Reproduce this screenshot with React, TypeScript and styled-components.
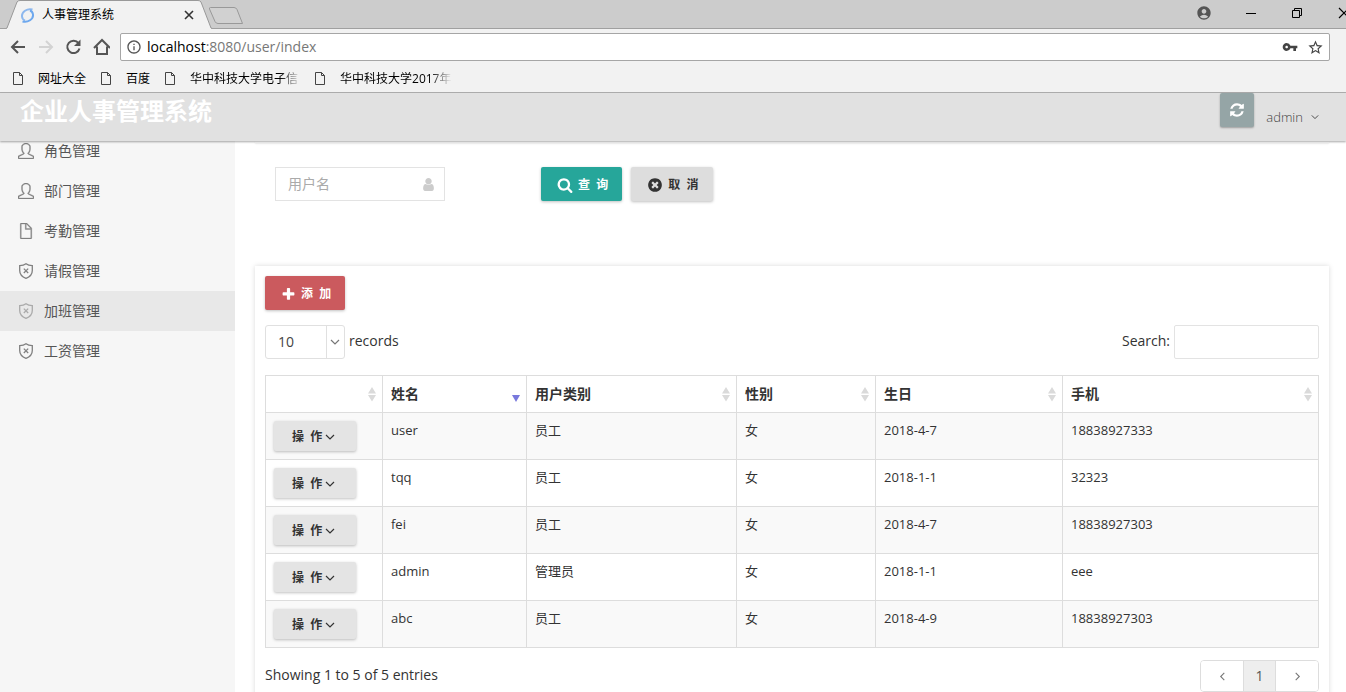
import React from "react";
import styled, { createGlobalStyle, css } from "styled-components";
import { MdAccountCircle, MdInfoOutline, MdStarBorder, MdVpnKey } from "react-icons/md";
import { SlDoc, SlUser } from "react-icons/sl";

const GlobalStyle = createGlobalStyle`
  * { box-sizing: border-box; }
  body {
    margin: 0;
    background: #fff;
    color: #333;
    font: 14px/20px "Open Sans", "Noto Sans CJK SC", sans-serif;
  }
  button, input, select { font: inherit; color: inherit; }
  button { cursor: pointer; }
  svg { display: block; flex: none; }
`;

const Shell = styled.div`
  display: flex;
  flex-direction: column;
  height: 100vh;
  overflow: hidden;
`;

/* ---------- browser window ---------- */

const TabStrip = styled.div`
  display: flex;
  flex: none;
  height: 29px;
  padding-left: 6px;
  background: #ccc;
  box-shadow: inset 0 -1px #a0a0a0;
`;

const Tab = styled.div`
  position: relative;
  display: flex;
  align-items: center;
  width: 206px;
  padding: 1px 18px 0 14px;
  color: #000;
  font-size: 12px;
`;

const TabShape = styled.svg`
  position: absolute;
  inset: 0;
`;

const TabTitle = styled.span`
  position: relative;
  flex: 1;
  margin-left: 7px;
`;

const TabIcon = styled.svg`
  position: relative;
`;

const PlainButton = styled.button`
  display: flex;
  position: relative;
  padding: 0;
  border: 0;
  background: none;
`;

const NewTab = styled(PlainButton)`
  align-self: flex-start;
  margin: 6px 0 0 -4px;
`;

const WindowControls = styled.div`
  display: flex;
  align-items: center;
  gap: 34px;
  margin-left: auto;
  height: 26px;
  color: #000;
`;

const Toolbar = styled.div`
  display: flex;
  flex: none;
  align-items: center;
  gap: 10px;
  height: 36px;
  padding: 0 16px 0 8px;
  background: #f2f2f2;
  color: #555;
`;

const NavButton = styled(PlainButton)<{ $dim?: boolean }>`
  color: ${(p) => (p.$dim ? "#d3d3d3" : "#555")};
`;

const AddressBar = styled.div`
  display: flex;
  flex: 1;
  align-items: center;
  height: 28px;
  padding: 0 5px;
  border: 1px solid #a6a6a6;
  border-radius: 2px;
  background: #fff;
`;

const Url = styled.div`
  flex: 1;
  margin-left: 5px;
  color: #777;
  font-size: 14px;
  b { color: #000; font-weight: 400; }
`;

const AddressIcons = styled.div`
  display: flex;
  align-items: center;
  gap: 9px;
  color: #444;
`;

const Bookmarks = styled.nav`
  display: flex;
  flex: none;
  gap: 15px;
  height: 28px;
  padding: 0 13px;
  border-bottom: 1px solid #b0b0b0;
  background: #f2f2f2;
`;

const Bookmark = styled.a`
  display: flex;
  align-items: center;
  gap: 14px;
  color: #000;
  font-size: 12px;
  text-decoration: none;
  svg { color: #444; }
`;

const BookmarkText = styled.span<{ $faded: boolean }>`
  white-space: nowrap;
  ${(p) =>
    p.$faded &&
    css`
      min-width: 110px;
      mask-image: linear-gradient(to right, #000 90px, transparent 112px);
    `}
`;

/* ---------- application ---------- */

const Header = styled.header`
  position: relative;
  z-index: 1;
  display: flex;
  flex: none;
  justify-content: space-between;
  align-items: flex-start;
  height: 48px;
  padding: 0 27px 0 20px;
  background: #e1e1e1;
  box-shadow: 0 1px 2px rgba(0, 0, 0, 0.35);
`;

const Brand = styled.h1`
  margin: 0;
  color: #fff;
  font-size: 24px;
  font-weight: 700;
  line-height: 36px;
`;

const HeaderTools = styled.div`
  display: flex;
  gap: 12px;
`;

const RefreshButton = styled.button`
  display: grid;
  place-items: center;
  width: 34px;
  height: 34px;
  padding: 0;
  border: 0;
  border-radius: 2px;
  background: #95a5a6;
  color: #fff;
  box-shadow: 0 1px 2px rgba(0, 0, 0, 0.3);
`;

const UserMenu = styled.button`
  display: flex;
  align-items: center;
  gap: 8px;
  height: 48px;
  padding: 0;
  border: 0;
  background: none;
  color: #444;
  font-size: 13px;
  font-weight: 300;
`;

const Body = styled.div`
  display: flex;
  flex: 1;
  min-height: 0;
`;

const Sidebar = styled.nav`
  flex: none;
  width: 235px;
  background: #f6f6f6;
`;

const Menu = styled.ul`
  margin: -10px 0 0;
  padding: 0;
  list-style: none;
`;

const MenuLink = styled.a<{ $active: boolean }>`
  display: flex;
  align-items: center;
  gap: 10px;
  height: 40px;
  padding: 0 18px;
  background: ${(p) => (p.$active ? "#e8e8e8" : "none")};
  color: #555;
  text-decoration: none;
  svg { color: ${(p) => (p.$active ? "#aaa" : "#808080")}; }
`;

const Main = styled.main`
  flex: 1;
  min-width: 0;
  padding: 0 17px 0 20px;
`;

const UpperPanelEdge = styled.div`
  height: 2px;
  background: #fff;
  box-shadow: 0 1px 2px rgba(0, 0, 0, 0.08);
`;

const Filters = styled.form`
  display: grid;
  grid-template-columns: 266px auto;
  padding: 24px 20px 65px;
`;

const NameField = styled.label`
  display: flex;
  align-items: center;
  width: 170px;
  height: 34px;
  padding: 0 8px 0 12px;
  border: 1px solid #e3e3e3;
  color: #ccc;
  input {
    flex: 1;
    min-width: 0;
    padding: 0;
    border: 0;
    outline: 0;
    color: #333;
  }
  input::placeholder { color: #aaa; opacity: 1; }
`;

const ButtonGroup = styled.div`
  display: flex;
  gap: 9px;
`;

const tones = {
  teal: "background: #26a69a; color: #fff;",
  grey: "background: #ddd; color: #333;",
  red: "background: #cb5a5e; color: #fff;",
  light: "background: #e4e4e4; color: #333;",
};

const Button = styled.button<{ $tone: keyof typeof tones; $small?: boolean }>`
  display: flex;
  align-items: center;
  justify-content: center;
  gap: ${(p) => (p.$small ? 3 : 5)}px;
  height: ${(p) => (p.$small ? 30 : 34)}px;
  padding: ${(p) => (p.$small ? "2px 21px 0 18px" : "2px 14px 0 16px")};
  border: 0;
  border-radius: 2px;
  font-size: 12px;
  font-weight: 700;
  white-space: nowrap;
  box-shadow: 0 1px 3px rgba(0, 0, 0, 0.25);
  ${(p) => tones[p.$tone]}
`;

const Panel = styled.section`
  padding: 10px 10px 20px;
  background: #fff;
  box-shadow: 0 0 5px rgba(0, 0, 0, 0.15);
`;

const Bar = styled.div<{ $top: number }>`
  display: flex;
  align-items: center;
  justify-content: space-between;
  margin-top: ${(p) => p.$top}px;
`;

const Caption = styled.span`
  padding-bottom: 2px;
`;

const Length = styled.label`
  display: flex;
  align-items: center;
  gap: 4px;
`;

const SelectBox = styled.span`
  display: flex;
  align-items: center;
  position: relative;
  width: 80px;
  height: 34px;
  border: 1px solid #e0e0e0;
  border-radius: 3px;
  color: #777;
  select {
    width: 100%;
    height: 32px;
    padding: 0 0 0 12px;
    border: 0;
    outline: 0;
    background: linear-gradient(#e0e0e0, #e0e0e0) 60px 0 / 1px 100% no-repeat;
    color: #444;
    appearance: none;
  }
  svg {
    position: absolute;
    right: 4px;
    pointer-events: none;
  }
`;

const Search = styled.label`
  display: flex;
  align-items: center;
  gap: 4px;
  input {
    width: 145px;
    height: 34px;
    padding: 6px 12px;
    border: 1px solid #e3e3e3;
    border-radius: 2px;
  }
`;

const Table = styled.table`
  width: 100%;
  margin-top: 16px;
  border-collapse: collapse;
  table-layout: fixed;
  font-size: 13px;
  line-height: 18px;
`;

const HeadCell = styled.th`
  padding: 8px;
  border: 1px solid #ddd;
  text-align: left;
  font-size: 14px;
  font-weight: 700;
  > div {
    display: flex;
    align-items: center;
    justify-content: space-between;
    height: 20px;
    margin-right: -2px;
  }
`;

const Row = styled.tr`
  &:nth-child(odd) { background: #f9f9f9; }
`;

const Cell = styled.td`
  padding: 8px;
  border: 1px solid #ddd;
  vertical-align: top;
`;

const Pager = styled.div`
  display: flex;
  height: 32px;
  border: 1px solid #ddd;
  border-radius: 4px;
  overflow: hidden;
`;

const PageButton = styled.button<{ $current?: boolean }>`
  display: grid;
  place-items: center;
  width: ${(p) => (p.$current ? 33 : 42)}px;
  padding: 0;
  border: solid #ddd;
  border-width: ${(p) => (p.$current ? "0 1px" : "0")};
  background: ${(p) => (p.$current ? "#eee" : "#fff")};
  color: ${(p) => (p.$current ? "#555" : "#777")};
`;

/* ---------- icons ---------- */

const chevrons = {
  down: "M1 3 L5 7 L9 3",
  left: "M7 1 L3 5 L7 9",
  right: "M3 1 L7 5 L3 9",
};

function Chevron({ to = "down", size = 10 }: { to?: keyof typeof chevrons; size?: number }) {
  return (
    <svg width={size} height={size} viewBox="0 0 10 10" fill="none" stroke="currentColor" strokeWidth="1.2">
      <path d={chevrons[to]} />
    </svg>
  );
}

const glyphs = {
  search:
    "M1216 832q0-185-131.500-316.500t-316.500-131.500-316.500 131.500-131.500 316.500 131.500 316.500 316.500 131.500 316.500-131.500 131.500-316.500zm512 832q0 52-38 90t-90 38q-54 0-90-38l-343-342q-179 124-399 124-143 0-273.500-55.500t-225-150-150-225-55.500-273.500 55.500-273.500 150-225 225-150 273.500-55.500 273.500 55.500 225 150 150 225 55.500 273.500q0 220-124 399l343 343q37 37 37 90z",
  cancel:
    "M1277 1122q0-26-19-45l-181-181 181-181q19-19 19-45 0-27-19-46l-90-90q-19-19-46-19-26 0-45 19l-181 181-181-181q-19-19-45-19-27 0-46 19l-90 90q-19 19-19 46 0 26 19 45l181 181-181 181q-19 19-19 45 0 27 19 46l90 90q19 19 46 19 26 0 45-19l181-181 181 181q19 19 45 19 27 0 46-19l90-90q19-19 19-46zm387-226q0 209-103 385.500t-279.500 279.500-385.500 103-385.500-103-279.500-279.500-103-385.500 103-385.500 279.500-279.500 385.500-103 385.500 103 279.500 279.500 103 385.500z",
  plus:
    "M1600 736v192q0 40-28 68t-68 28h-416v416q0 40-28 68t-68 28h-192q-40 0-68-28t-28-68v-416h-416q-40 0-68-28t-28-68v-192q0-40 28-68t68-28h416v-416q0-40 28-68t68-28h192q40 0 68 28t28 68v416h416q40 0 68 28t28 68z",
  refresh:
    "M1639 1056q0 5-1 7-64 268-268 434.500t-478 166.500q-146 0-282.500-55t-243.500-157l-129 129q-19 19-45 19t-45-19-19-45v-448q0-26 19-45t45-19h448q26 0 45 19t19 45-19 45l-137 137q71 66 161 102t187 36q134 0 250-65t186-179q11-17 53-117 8-23 30-23h192q13 0 22.500 9.500t9.500 22.500zm25-800v448q0 26-19 45t-45 19h-448q-26 0-45-19t-19-45 19-45l138-138q-148-137-349-137-134 0-250 65t-186 179q-11 17-53 117-8 23-30 23h-199q-13 0-22.500-9.500t-9.500-22.500v-7q65-268 270-434.500t480-166.500q146 0 284 55.500t245 156.500l130-129q19-19 45-19t45 19 19 45z",
  user:
    "M1536 1399q0 109-62.500 187t-150.500 78h-854q-88 0-150.500-78t-62.500-187q0-85 8.500-160.500t31.500-152 58.500-131 94-89 134.500-34.500q131 128 313 128t313-128q76 0 134.500 34.500t94 89 58.500 131 31.500 152 8.500 160.500zm-256-887q0 159-112.500 271.500t-271.500 112.500-271.500-112.500-112.500-271.500 112.500-271.500 271.500-112.500 271.500 112.500 112.500 271.500z",
};

function Glyph({ name, size = 16 }: { name: keyof typeof glyphs; size?: number }) {
  return (
    <svg width={size} height={size} viewBox="0 0 1792 1792" fill="currentColor">
      <path d={glyphs[name]} />
    </svg>
  );
}

function Arrow({ forward }: { forward?: boolean }) {
  return (
    <svg width="18" height="18" viewBox="0 0 18 18" fill="none" stroke="currentColor" strokeWidth="2">
      <path d={forward ? "M3 9H16M10 3L16 9L10 15" : "M17 9H4M10 3L4 9L10 15"} />
    </svg>
  );
}

function Reload() {
  return (
    <svg width="18" height="18" viewBox="0 0 18 18">
      <path d="M14.500 5.200A6.200 6.200 0 1 0 15.500 10.500" fill="none" stroke="currentColor" strokeWidth="2" />
      <path d="M16.500 1.500V8H10Z" fill="currentColor" />
    </svg>
  );
}

function Home() {
  return (
    <svg width="18" height="18" viewBox="0 0 18 18" fill="none" stroke="currentColor" strokeWidth="2">
      <path d="M2 10L10 2L18 10M5 8.500V16H15V8.500" />
    </svg>
  );
}

function PageIcon() {
  return (
    <svg width="11" height="14" viewBox="0 0 11 14" fill="none" stroke="currentColor">
      <path d="M.5 .5H6.500L9.500 3.500V12.500H.5Z M6.500 .5V3.500H9.500" />
    </svg>
  );
}

function Shield() {
  return (
    <svg width="16" height="16" viewBox="0 0 16 16" fill="none" stroke="currentColor" strokeWidth="1.300">
      <path d="M8 .8C6.500 2 4 2.700 1.700 2.700V7.500C1.700 11.500 4.500 14 8 15.300C11.500 14 14.300 11.500 14.300 7.500V2.700C12 2.700 9.500 2 8 .8Z" />
      <path d="M5.800 5.600L10.200 10M10.200 5.600L5.800 10" />
    </svg>
  );
}

function UserOutline() {
  return <SlUser size={16} stroke="currentColor" strokeWidth={20} />;
}

function DocOutline() {
  return <SlDoc size={16} stroke="currentColor" strokeWidth={20} />;
}

function SortIcon({ sorted }: { sorted: boolean }) {
  return (
    <svg width="8" height="16" viewBox="0 0 8 16">
      {!sorted && <path d="M0 7.500L4 1L8 7.500Z M0 9L4 15.500L8 9Z" fill="#dadada" />}
      {sorted && <path d="M0 9L4 16L8 9Z" fill="#7878dc" />}
    </svg>
  );
}

/* ---------- data ---------- */

const bookmarks = ["网址大全", "百度", "华中科技大学电子信", "华中科技大学2017年"];

const menu = [
  { label: "角色管理", Icon: UserOutline },
  { label: "部门管理", Icon: UserOutline },
  { label: "考勤管理", Icon: DocOutline },
  { label: "请假管理", Icon: Shield },
  { label: "加班管理", Icon: Shield },
  { label: "工资管理", Icon: Shield },
];

const columns = [
  { label: "", width: 117 },
  { label: "姓名", width: 144 },
  { label: "用户类别", width: 210 },
  { label: "性别", width: 139 },
  { label: "生日", width: 187 },
  { label: "手机", width: 256 },
];

const users = [
  ["user", "员工", "女", "2018-4-7", "18838927333"],
  ["tqq", "员工", "女", "2018-1-1", "32323"],
  ["fei", "员工", "女", "2018-4-7", "18838927303"],
  ["admin", "管理员", "女", "2018-1-1", "eee"],
  ["abc", "员工", "女", "2018-4-9", "18838927303"],
];

function BrowserChrome() {
  return (
    <>
      <TabStrip>
        <Tab>
          <TabShape width="206" height="29" viewBox="0 0 206 29">
            <path d="M0 29L1 28L11 2Q12 .5 14 .5H192Q194 .5 195 2L205 28L206 29Z" fill="#f2f2f2" />
            <path d="M0 28.500L1 28L11 2Q12 .5 14 .5H192Q194 .5 195 2L205 28L206 28.500" fill="none" stroke="#999" />
          </TabShape>
          <TabIcon width="15" height="15" viewBox="0 0 15 15" fill="none" strokeWidth="2">
            <path d="M12.500 1.500C7 0 1.500 4 2 8.500C2.200 10.500 3.500 12 5 12.500" stroke="#8db8ee" />
            <path d="M2.500 13.500C8 15 13.500 11 13 6.500C12.800 4.500 11.500 3 10 2.500" stroke="#6ea8ee" />
          </TabIcon>
          <TabTitle>人事管理系统</TabTitle>
          <PlainButton aria-label="关闭标签页">
            <svg width="10" height="10" viewBox="0 0 10 10" stroke="#333" strokeWidth="1.600">
              <path d="M1 1L9 9M9 1L1 9" />
            </svg>
          </PlainButton>
        </Tab>
        <NewTab aria-label="新标签页">
          <svg width="36" height="19" viewBox="0 0 36 19" fill="#d1d1d1" stroke="#999">
            <path d="M2.500 1.500H26Q28 1.500 29 3.500L34.500 17.500H10Q8 17.500 7 15.500L1.500 3Q1 1.500 2.500 1.500Z" />
          </svg>
        </NewTab>
        <WindowControls>
          <PlainButton aria-label="用户">
            <MdAccountCircle size={16} color="#555" />
          </PlainButton>
          <PlainButton aria-label="最小化">
            <svg width="12" height="10" stroke="#000"><path d="M0 5.500H10" /></svg>
          </PlainButton>
          <PlainButton aria-label="还原">
            <svg width="12" height="12" fill="none" stroke="#000">
              <path d="M.5 3.500H7.500V10.500H.5Z M2.500 3V1.500H9.500V8.500H8" />
            </svg>
          </PlainButton>
          <PlainButton aria-label="关闭">
            <svg width="8" height="12" viewBox="0 0 8 12" stroke="#000" strokeWidth="1.200">
              <path d="M1 1L11 11M11 1L1 11" />
            </svg>
          </PlainButton>
        </WindowControls>
      </TabStrip>
      <Toolbar>
        <NavButton aria-label="后退"><Arrow /></NavButton>
        <NavButton aria-label="前进" $dim><Arrow forward /></NavButton>
        <NavButton aria-label="刷新"><Reload /></NavButton>
        <NavButton aria-label="主页"><Home /></NavButton>
        <AddressBar>
          <MdInfoOutline size={16} />
          <Url><b>localhost</b>:8080/user/index</Url>
          <AddressIcons>
            <MdVpnKey size={16} />
            <MdStarBorder size={17} />
          </AddressIcons>
        </AddressBar>
      </Toolbar>
      <Bookmarks>
        {bookmarks.map((text) => (
          <Bookmark href="#" key={text}>
            <PageIcon />
            <BookmarkText $faded={text.length > 6}>{text}</BookmarkText>
          </Bookmark>
        ))}
      </Bookmarks>
    </>
  );
}

export default function App() {
  return (
    <Shell>
      <GlobalStyle />
      <BrowserChrome />
      <Header>
        <Brand>企业人事管理系统</Brand>
        <HeaderTools>
          <RefreshButton aria-label="刷新"><Glyph name="refresh" /></RefreshButton>
          <UserMenu>admin<Chevron size={8} /></UserMenu>
        </HeaderTools>
      </Header>
      <Body>
        <Sidebar>
          <Menu>
            {menu.map(({ label, Icon }) => (
              <li key={label}>
                <MenuLink href="#" $active={label === "加班管理"}>
                  <Icon />
                  {label}
                </MenuLink>
              </li>
            ))}
          </Menu>
        </Sidebar>
        <Main>
          <UpperPanelEdge />
          <Filters>
            <NameField>
              <input placeholder="用户名" aria-label="用户名" />
              <Glyph name="user" size={15} />
            </NameField>
            <ButtonGroup>
              <Button type="button" $tone="teal"><Glyph name="search" />查{"\u00a0\u00a0"}询</Button>
              <Button type="button" $tone="grey"><Glyph name="cancel" />取{"\u00a0\u00a0"}消</Button>
            </ButtonGroup>
          </Filters>
          <Panel>
            <Button type="button" $tone="red"><Glyph name="plus" size={15} />添{"\u00a0\u00a0"}加</Button>
            <Bar $top={15}>
              <Length>
                <SelectBox>
                  <select defaultValue="10">
                    <option>10</option>
                    <option>25</option>
                    <option>50</option>
                  </select>
                  <Chevron />
                </SelectBox>
                <Caption>records</Caption>
              </Length>
              <Search>
                <Caption>Search:</Caption>
                <input type="search" />
              </Search>
            </Bar>
            <Table>
              <colgroup>
                {columns.map((c) => (
                  <col key={c.label} width={c.width} />
                ))}
              </colgroup>
              <thead>
                <tr>
                  {columns.map((c) => (
                    <HeadCell key={c.label}>
                      <div>
                        <span>{c.label}</span>
                        <SortIcon sorted={c.label === "姓名"} />
                      </div>
                    </HeadCell>
                  ))}
                </tr>
              </thead>
              <tbody>
                {users.map((user) => (
                  <Row key={user[0]}>
                    <Cell>
                      <Button type="button" $tone="light" $small>
                        操{"\u00a0\u00a0"}作<Chevron />
                      </Button>
                    </Cell>
                    {user.map((value, i) => (
                      <Cell key={i}>{value}</Cell>
                    ))}
                  </Row>
                ))}
              </tbody>
            </Table>
            <Bar $top={12}>
              <Caption>Showing 1 to 5 of 5 entries</Caption>
              <Pager>
                <PageButton aria-label="上一页"><Chevron to="left" size={9} /></PageButton>
                <PageButton $current>1</PageButton>
                <PageButton aria-label="下一页"><Chevron to="right" size={9} /></PageButton>
              </Pager>
            </Bar>
          </Panel>
        </Main>
      </Body>
    </Shell>
  );
}
